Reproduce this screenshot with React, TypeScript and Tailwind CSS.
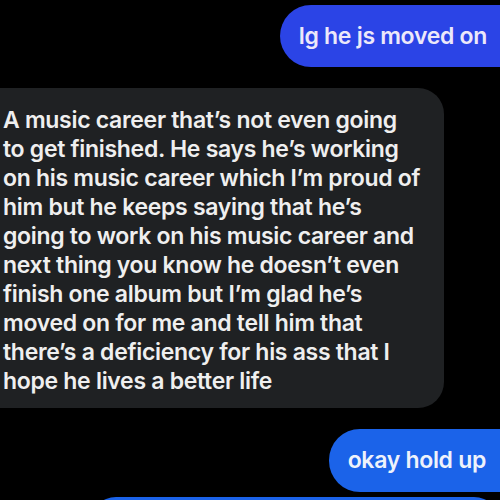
import React from 'react';

const lines = [
  'A music career that’s not even going',
  'to get finished. He says he’s working',
  'on his music career which I’m proud of',
  'him but he keeps saying that he’s',
  'going to work on his music career and',
  'next thing you know he doesn’t even',
  'finish one album but I’m glad he’s',
  'moved on for me and tell him that',
  'there’s a deficiency for his ass that I',
  'hope he lives a better life',
];

const App = () => {
  return (
    <div className="w-[500px] h-[500px] overflow-hidden bg-black font-['Inter','Liberation_Sans',sans-serif] antialiased">
      <div className="flex flex-col pt-[5px]">
        <div className="flex justify-end">
          <div className="mr-[-30px] h-[62px] rounded-[31px] bg-[#2b44e6] pl-[19px] pr-[43px] flex items-center text-[23px] font-semibold text-[#ece8fa] tracking-[-0.3px]">
            lg he js moved on
          </div>
        </div>

        <div className="mt-[21px] ml-[-30px] w-[474px] rounded-[26px] bg-[#1f2123] pl-[33px] pr-[20px] pt-[18px] pb-[12px]">
          <div className="text-[23px] leading-[29px] font-semibold text-[#efefef] tracking-[-0.3px]">
            {lines.map((line) => (
              <div key={line} className="whitespace-nowrap">
                {line}
              </div>
            ))}
          </div>
        </div>

        <div className="mt-[21px] flex justify-end">
          <div className="mr-[-30px] h-[63px] rounded-[31px] bg-[#1b63e9] pl-[19px] pr-[44px] flex items-center text-[23px] font-semibold text-[#eef2fb] tracking-[-0.3px]">
            okay hold up
          </div>
        </div>

        <div className="mt-[5px] ml-[90px] h-[40px] rounded-t-[26px] bg-[#1b63e9]" />
      </div>
    </div>
  );
};

export default App;
